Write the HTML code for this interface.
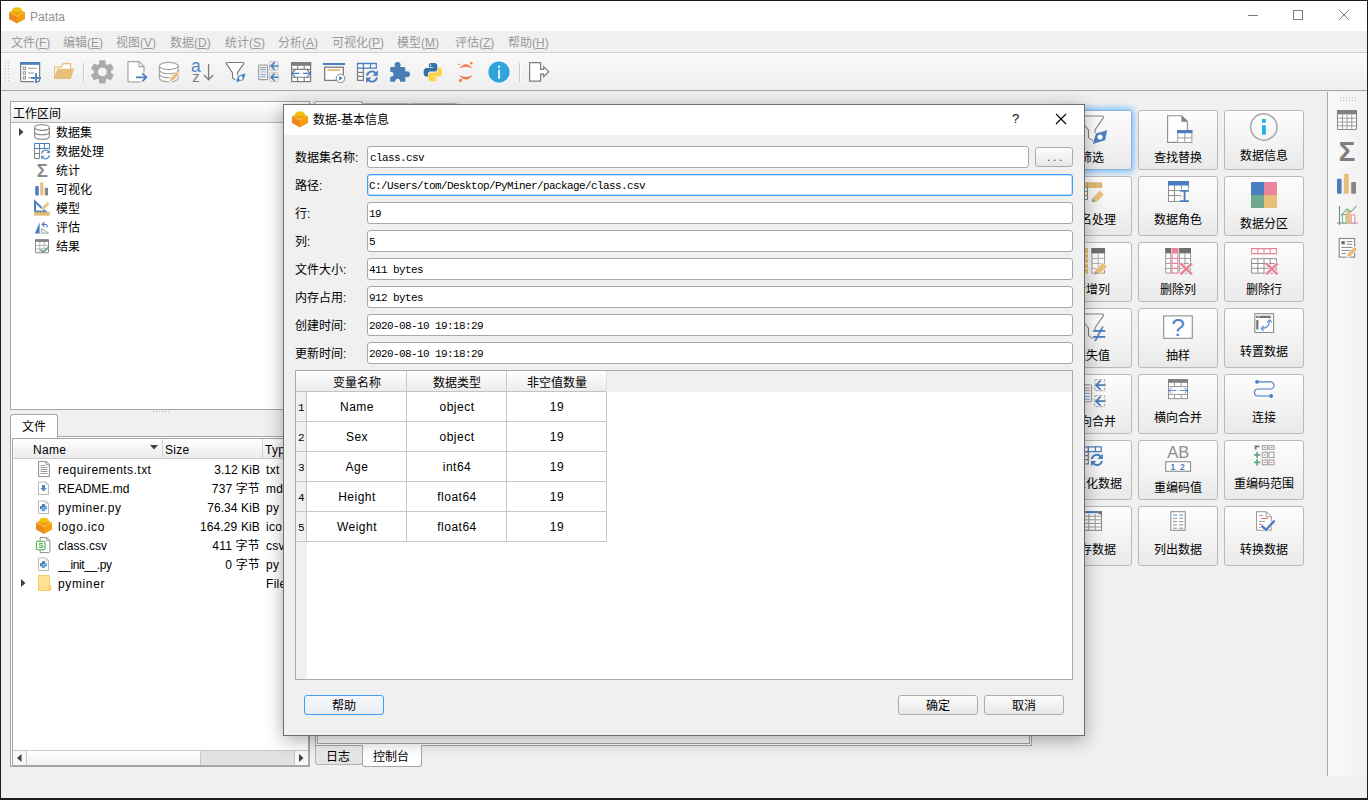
<!DOCTYPE html>
<html lang="zh">
<head>
<meta charset="utf-8">
<title>Patata</title>
<style>
*{box-sizing:border-box;margin:0;padding:0}
html,body{width:1368px;height:800px;overflow:hidden}
body{position:relative;background:#f0f0f0;color:#000;font:12px/16px "Liberation Sans","Noto Sans CJK SC",sans-serif}
.abs{position:absolute}
.t{position:absolute;white-space:nowrap;line-height:16px;margin-top:1px}
svg{position:absolute;overflow:visible}
/* window chrome */
#titlebar{left:1px;top:1px;width:1366px;height:30px;background:#fff}
#menubar{left:1px;top:31px;width:1366px;height:21px;background:#f0f0f0;color:#9a9a9a}
#menubar .t{top:3px}
#toolbar{left:1px;top:52px;width:1366px;height:39px;background:linear-gradient(#f9f9f9,#eeeeee);border-top:1px solid #d0d0d0;border-bottom:1px solid #a8a8a8}
#winborder{left:0;top:0;width:1368px;height:800px;border:1px solid #1c1c1c;border-bottom-width:2px;pointer-events:none;z-index:50}
/* left */
.frame{border:1px solid #a6a6a6;background:#fff}
.hdr{background:linear-gradient(#ffffff,#f3f3f3 60%,#ececec);}
.mono{font-family:"Liberation Mono","Noto Sans CJK SC",monospace;font-size:11px;letter-spacing:-.6px}
/* dialog */
#dlg{left:283px;top:104px;width:802px;height:632px;border:1px solid #6e6e6e;background:#f0f0f0;box-shadow:0 4px 17px 0 rgba(0,0,0,.33);z-index:20}
#dlg .title{left:0;top:0;width:800px;height:30px;background:#fff}
.inp{position:absolute;height:22px;border:1px solid #a9a9a9;border-radius:3px;background:#fff}
.btn{position:absolute;border:1px solid #adadad;border-radius:3px;background:linear-gradient(#fdfdfd,#f0f0f0 60%,#e6e6e6);text-align:center}
.tb{position:absolute;width:80px;height:60px;border:1px solid #b9b9b9;border-radius:3px;background:linear-gradient(#fdfdfd,#f3f3f3 55%,#e9e9e9);text-align:center}
.tb span{position:absolute;margin-top:2px;left:-20px;right:-20px;white-space:nowrap;font-size:12px;line-height:16px}
.hc{text-align:center}
.cc{width:100px;text-align:center;letter-spacing:.5px}
.fl{letter-spacing:.3px}
</style>
</head>
<body>
<!-- TITLEBAR -->
<div class="abs" id="titlebar">
  <svg style="left:8px;top:6px" width="16" height="17" viewBox="0 0 16 17"><path d="M0 5.3L8 1.2L16 5.3L8 9.6Z" fill="#f5b31a"/><path d="M0 5.3L8 9.6V16.6L0 12.1Z" fill="#ec881d"/><path d="M16 5.3L8 9.6V16.6L16 12.1Z" fill="#f59d0e"/><path d="M3.5 2.8V4.8A4.5 2.4 0 0 0 12.5 4.8V2.800Z" fill="#ee9a1e"/><ellipse cx="8" cy="2.800" rx="4.500" ry="2.500" fill="#f2c10f"/></svg>
  <div class="t" style="left:29px;top:7px;color:#8f8f8f;font-size:12px;letter-spacing:.05px">Patata</div>
  <svg style="left:1247px;top:14px" width="11" height="2"><path d="M0 .5H10" stroke="#7c7c7c" stroke-width="1"/></svg>
  <svg style="left:1292px;top:9px" width="11" height="11"><rect x=".5" y=".5" width="9" height="9" fill="none" stroke="#7c7c7c"/></svg>
  <svg style="left:1338px;top:9px" width="11" height="11"><path d="M0 0L10 10M10 0L0 10" stroke="#7c7c7c" stroke-width="1"/></svg>
</div>
<!-- MENUBAR -->
<div class="abs" id="menubar">
  <div class="t" style="left:10px">文件(<u>F</u>)</div>
  <div class="t" style="left:62px">编辑(<u>E</u>)</div>
  <div class="t" style="left:115px">视图(<u>V</u>)</div>
  <div class="t" style="left:169px">数据(<u>D</u>)</div>
  <div class="t" style="left:224px">统计(<u>S</u>)</div>
  <div class="t" style="left:277px">分析(<u>A</u>)</div>
  <div class="t" style="left:331px">可视化(<u>P</u>)</div>
  <div class="t" style="left:396px">模型(<u>M</u>)</div>
  <div class="t" style="left:454px">评估(<u>Z</u>)</div>
  <div class="t" style="left:507px">帮助(<u>H</u>)</div>
</div>
<!-- TOOLBAR -->
<div class="abs" id="toolbar">
<!--TOOLBAR-ICONS-->
</div>

<!-- LEFT: WORKSPACE -->
<div class="abs frame" id="ws" style="left:10px;top:101px;width:300px;height:309px">
<div class="abs hdr" style="left:0;top:0;width:298px;height:21px;border-bottom:1px solid #b4b4b4"></div>
<div class="t" style="left:2px;top:3px">工作区间</div>
<svg style="left:8px;top:26px" width="5" height="8"><path d="M0 0L4.5 4L0 8Z" fill="#404040"/></svg>
<div class="t" style="left:45px;top:22px">数据集</div>
<!--WSI0-->
<div class="t" style="left:45px;top:41px">数据处理</div>
<!--WSI1-->
<div class="t" style="left:45px;top:60px">统计</div>
<!--WSI2-->
<div class="t" style="left:45px;top:79px">可视化</div>
<!--WSI3-->
<div class="t" style="left:45px;top:98px">模型</div>
<!--WSI4-->
<div class="t" style="left:45px;top:117px">评估</div>
<!--WSI5-->
<div class="t" style="left:45px;top:136px">结果</div>
<!--WSI6-->
</div>
<div class="abs" style="left:153px;top:411px;width:16px;height:1px;background:repeating-linear-gradient(90deg,#b0b0b0 0 1px,transparent 1px 3px)"></div>
<!-- LEFT: FILES -->
<div class="abs" id="files" style="left:10px;top:414px;width:301px;height:354px">
<div class="abs" style="left:0;top:22px;width:300px;height:331px;border:1px solid #a6a6a6;background:#fff"></div>
<div class="abs" style="left:2px;top:24px;width:297px;height:328px;border:1px solid #a6a6a6;background:#fff"></div>
<div class="abs" style="left:0;top:0;width:48px;height:24px;border:1px solid #a6a6a6;border-bottom:none;border-radius:3px 3px 0 0;background:#fff"></div>
<div class="t" style="left:12px;top:4px">文件</div>
<div class="abs hdr" style="left:3px;top:25px;width:295px;height:20px;border-bottom:1px solid #c9c9c9"></div>
<div class="abs" style="left:152px;top:25px;width:1px;height:20px;background:#d0d0d0"></div>
<div class="abs" style="left:252px;top:25px;width:1px;height:20px;background:#d0d0d0"></div>
<div class="t fl" style="left:23px;top:27px">Name</div>
<div class="t fl" style="left:155px;top:27px">Size</div>
<div class="t fl" style="left:255px;top:27px">Type</div>
<svg style="left:140px;top:31px" width="8" height="5"><path d="M0 0H8L4 4.5Z" fill="#404040"/></svg>
<div class="t fl" style="left:48px;top:47px;letter-spacing:0.46px">requirements.txt</div>
<div class="t fl" style="left:153px;width:97px;text-align:right;top:47px;letter-spacing:0.06px">3.12 KiB</div>
<div class="t fl" style="left:256px;top:47px">txt</div>
<!--FI0-->
<div class="t fl" style="left:48px;top:66px;letter-spacing:0px">README.md</div>
<div class="t fl" style="left:153px;width:97px;text-align:right;top:66px;letter-spacing:0.13px">737 字节</div>
<div class="t fl" style="left:256px;top:66px">md</div>
<!--FI1-->
<div class="t fl" style="left:48px;top:85px;letter-spacing:0.55px">pyminer.py</div>
<div class="t fl" style="left:153px;width:97px;text-align:right;top:85px;letter-spacing:0.09px">76.34 KiB</div>
<div class="t fl" style="left:256px;top:85px">py</div>
<!--FI2-->
<div class="t fl" style="left:48px;top:104px;letter-spacing:0.73px">logo.ico</div>
<div class="t fl" style="left:153px;width:97px;text-align:right;top:104px;letter-spacing:0.14px">164.29 KiB</div>
<div class="t fl" style="left:256px;top:104px">ico</div>
<!--FI3-->
<div class="t fl" style="left:48px;top:123px;letter-spacing:0.04px">class.csv</div>
<div class="t fl" style="left:153px;width:97px;text-align:right;top:123px;letter-spacing:0.2px">411 字节</div>
<div class="t fl" style="left:256px;top:123px">csv</div>
<!--FI4-->
<div class="t fl" style="left:48px;top:142px;letter-spacing:-0.4px">__init__.py</div>
<div class="t fl" style="left:153px;width:97px;text-align:right;top:142px;letter-spacing:0.16px">0 字节</div>
<div class="t fl" style="left:256px;top:142px">py</div>
<!--FI5-->
<div class="t fl" style="left:48px;top:161px;letter-spacing:0.63px">pyminer</div>
<div class="t fl" style="left:256px;top:161px">File</div>
<!--FI6-->
<svg style="left:11px;top:165px" width="5" height="8"><path d="M0 0L4.5 4L0 8Z" fill="#404040"/></svg>
<div class="abs" style="left:3px;top:336px;width:295px;height:15px;background:#e1e1e1;border-top:1px solid #c8c8c8"></div>
<div class="abs" style="left:3px;top:337px;width:14px;height:14px;background:#f7f7f7;border-right:1px solid #c8c8c8"></div>
<div class="abs" style="left:284px;top:337px;width:14px;height:14px;background:#f7f7f7;border-left:1px solid #c8c8c8"></div>
<div class="abs" style="left:17px;top:337px;width:174px;height:14px;background:linear-gradient(#ffffff,#f1f1f1);border-right:1px solid #c8c8c8"></div>
<svg style="left:7px;top:340px" width="5" height="8"><path d="M4.5 0L0 4L4.5 8Z" fill="#404040"/></svg>
<svg style="left:289px;top:340px" width="5" height="8"><path d="M0 0L4.5 4L0 8Z" fill="#404040"/></svg>
</div>

<!-- CENTER -->
<div class="abs" id="center">
<div class="abs" style="left:315px;top:123px;width:717px;height:623px;border:1px solid #a6a6a6;background:#fff"></div>
<div class="abs" style="left:317px;top:125px;width:713px;height:619px;border:1px solid #a6a6a6;background:#fff"></div>
<div class="abs" style="left:314px;top:101px;width:49px;height:23px;border:1px solid #a6a6a6;border-bottom:none;border-radius:3px 3px 0 0;background:#fff"></div>
<div class="abs" style="left:362px;top:103px;width:49px;height:21px;border:1px solid #b4b4b4;border-bottom:none;border-radius:3px 3px 0 0;background:linear-gradient(#f4f4f4,#e4e4e4)"></div>
<div class="abs" style="left:410px;top:103px;width:48px;height:21px;border:1px solid #b4b4b4;border-bottom:none;border-radius:3px 3px 0 0;background:linear-gradient(#f4f4f4,#e4e4e4)"></div>
<div class="abs" style="left:315px;top:746px;width:48px;height:19px;border:1px solid #b4b4b4;border-top:none;border-radius:0 0 3px 3px;background:linear-gradient(#efefef,#e2e2e2)"></div>
<div class="abs" style="left:362px;top:745px;width:60px;height:22px;border:1px solid #a6a6a6;border-top:none;border-radius:0 0 3px 3px;background:#fff"></div>
<div class="t" style="left:326px;top:748px">日志</div>
<div class="t" style="left:373px;top:748px">控制台</div>
</div>

<!-- RIGHT TOOL BUTTONS -->
<div class="abs" id="tools" style="left:0;top:0">
<div class="tb" style="left:1052px;top:110px;border-color:#8ab4dc;box-shadow:0 0 6px 2px rgba(110,185,250,.9)"><span style="top:37px">筛选</span><!--TI00--></div>
<div class="tb" style="left:1138px;top:110px"><span style="top:37px">查找替换</span><!--TI01--></div>
<div class="tb" style="left:1224px;top:110px"><span style="top:35px">数据信息</span><!--TI02--></div>
<div class="tb" style="left:1052px;top:176px"><span style="top:33px">列名处理</span><!--TI10--></div>
<div class="tb" style="left:1138px;top:176px"><span style="top:33px">数据角色</span><!--TI11--></div>
<div class="tb" style="left:1224px;top:176px"><span style="top:37px">数据分区</span><!--TI12--></div>
<div class="tb" style="left:1052px;top:242px"><span style="top:37px">新增列</span><!--TI20--></div>
<div class="tb" style="left:1138px;top:242px"><span style="top:37px">删除列</span><!--TI21--></div>
<div class="tb" style="left:1224px;top:242px"><span style="top:37px">删除行</span><!--TI22--></div>
<div class="tb" style="left:1052px;top:308px"><span style="top:37px">缺失值</span><!--TI30--></div>
<div class="tb" style="left:1138px;top:308px"><span style="top:37px">抽样</span><!--TI31--></div>
<div class="tb" style="left:1224px;top:308px"><span style="top:33px">转置数据</span><!--TI32--></div>
<div class="tb" style="left:1052px;top:374px"><span style="top:37px">纵向合并</span><!--TI40--></div>
<div class="tb" style="left:1138px;top:374px"><span style="top:33px">横向合并</span><!--TI41--></div>
<div class="tb" style="left:1224px;top:374px"><span style="top:33px">连接</span><!--TI42--></div>
<div class="tb" style="left:1052px;top:440px"><span style="top:33px">标准化数据</span><!--TI50--></div>
<div class="tb" style="left:1138px;top:440px"><span style="top:37px">重编码值</span><!--TI51--></div>
<div class="tb" style="left:1224px;top:440px"><span style="top:33px">重编码范围</span><!--TI52--></div>
<div class="tb" style="left:1052px;top:506px"><span style="top:33px">保存数据</span><!--TI60--></div>
<div class="tb" style="left:1138px;top:506px"><span style="top:33px">列出数据</span><!--TI61--></div>
<div class="tb" style="left:1224px;top:506px"><span style="top:33px">转换数据</span><!--TI62--></div>
</div>

<!-- RIGHT TOOLBAR -->
<div class="abs" id="rbar" style="left:1327px;top:92px;width:40px;height:684px;background:linear-gradient(90deg,#fafafa,#f0f0f0);border-left:1px solid #a8a8a8">
<div class="abs" style="left:12px;top:5px;width:18px;height:4px;background:repeating-linear-gradient(90deg,#bcbcbc 0 1px,transparent 1px 3px) 0 0/100% 1px no-repeat,repeating-linear-gradient(90deg,#bcbcbc 0 1px,transparent 1px 3px) 0 3px/100% 1px no-repeat"></div>
<!--RB0-->
<!--RB1-->
<!--RB2-->
<!--RB3-->
<!--RB4-->
</div>

<svg id="bgsvg" style="left:0;top:0;z-index:5;pointer-events:none" width="1368" height="800" viewBox="0 0 1368 800">
<g id="tb">
<rect x="5" y="62" width="1" height="1" fill="#bdbdbd"/><rect x="5" y="65" width="1" height="1" fill="#bdbdbd"/><rect x="5" y="68" width="1" height="1" fill="#bdbdbd"/><rect x="5" y="71" width="1" height="1" fill="#bdbdbd"/><rect x="5" y="74" width="1" height="1" fill="#bdbdbd"/><rect x="5" y="77" width="1" height="1" fill="#bdbdbd"/><rect x="5" y="80" width="1" height="1" fill="#bdbdbd"/><rect x="8" y="62" width="1" height="1" fill="#bdbdbd"/><rect x="8" y="65" width="1" height="1" fill="#bdbdbd"/><rect x="8" y="68" width="1" height="1" fill="#bdbdbd"/><rect x="8" y="71" width="1" height="1" fill="#bdbdbd"/><rect x="8" y="74" width="1" height="1" fill="#bdbdbd"/><rect x="8" y="77" width="1" height="1" fill="#bdbdbd"/><rect x="8" y="80" width="1" height="1" fill="#bdbdbd"/><g transform="translate(18,60)"><rect x="2.6" y="2.6" width="19" height="19" rx="1.2" fill="#fff" stroke="#7d7d7d" stroke-width="1.2"/><rect x="2" y="2" width="20.2" height="2.8" fill="#4a7ebf"/>
<rect x="5.2" y="7" width="2.4" height="2.4" fill="#fff" stroke="#7d7d7d" stroke-width=".8"/><rect x="5.2" y="11.8" width="2.4" height="2.4" fill="#fff" stroke="#7d7d7d" stroke-width=".8"/><rect x="5.2" y="16.6" width="2.4" height="2.4" fill="#fff" stroke="#7d7d7d" stroke-width=".8"/>
<path d="M10 8.2H18.5M10 13H16M10 17.8H12.5" stroke="#9a9a9a" stroke-width="1.1"/>
<rect x="16" y="19.6" width="7" height="3.4" fill="#f3f3f3"/><path d="M21.6 17V20.400Q21.600 21.600 20.400 21.600H19" fill="none" stroke="#7d7d7d" stroke-width="1.2"/><path d="M12.900 18H22.900M18 13V23" stroke="#5288c8" stroke-width="1.900"/></g>
<g transform="translate(51,60)"><path d="M3.6 18.5V7.2H10.3L12.2 3.6H19.6V9" fill="#fff" stroke="#e8bf7a" stroke-width="1.2" stroke-linejoin="round"/><path d="M3 19L6.2 8.8H23L19.8 19Z" fill="#e8bf7a"/></g>
<path d="M83.5 63V82" stroke="#c9c9c9" stroke-width="1"/><path d="M84.5 63V82" stroke="#fdfdfd" stroke-width="1"/>
<g transform="translate(90,60)"><path d="M9.77 4.45 L10.00 1.17 L14.80 1.17 L15.03 4.45 L17.53 5.89 L20.50 4.45 L22.90 8.61 L20.17 10.46 L20.17 13.34 L22.90 15.19 L20.50 19.35 L17.53 17.91 L15.03 19.35 L14.80 22.63 L10.00 22.63 L9.77 19.35 L7.27 17.91 L4.30 19.35 L1.90 15.19 L4.63 13.34 L4.63 10.46 L1.90 8.61 L4.30 4.45 L7.27 5.89Z M17.6 11.9 A5.2 5.2 0 1 0 7.2 11.9 A5.2 5.2 0 1 0 17.6 11.9Z" fill="#ababab" fill-rule="evenodd" stroke="#ababab" stroke-width="1.6" stroke-linejoin="round"/></g>
<g transform="translate(124,60)"><path d="M4 1.6H15.2L20 6.4V21.8H4Z" fill="#fff"/><path d="M20 12.800V6.400L15.200 1.600H4V21.800H16.600" fill="none" stroke="#a6a6a6" stroke-width="1.2" stroke-linejoin="round"/><path d="M15 1.8V6.6H19.8" fill="none" stroke="#a6a6a6" stroke-width="1.1"/>
<path d="M12 17.300H22M18.200 13.300L22.400 17.300L18.200 21.300" fill="none" stroke="#4a7ebf" stroke-width="1.7"/></g>
<g transform="translate(157,60)"><path d="M2.4 6V18C2.4 20 6.6 21.8 11.8 21.8S21.2 20 21.2 18V6" fill="#fff" stroke="#a2a2a2" stroke-width="1.1"/><ellipse cx="11.8" cy="6" rx="9.4" ry="3.6" fill="#fff" stroke="#a2a2a2" stroke-width="1.1"/><path d="M2.4 10C2.4 12 6.6 13.8 11.8 13.8S21.2 12 21.2 10M2.4 14C2.4 16 6.6 17.8 11.8 17.8S21.2 16 21.2 14" fill="none" stroke="#a2a2a2" stroke-width="1.1"/>
<path d="M12.2 22.2L13.4 17.8L19.8 11.4L22.6 14.2L16.2 20.8Z" fill="#e8bf7a" stroke="#fff" stroke-width=".8"/></g>
<g transform="translate(190,60)"><text x="1" y="11.5" font-family="Liberation Sans, sans-serif" font-size="17.5" fill="#4f86c6">a</text><text x="2.2" y="21.9" font-family="Liberation Sans, sans-serif" font-size="15" fill="#7d7d7d">z</text>
<path d="M18.6 4V19.6M14 15L18.6 19.8L23.2 15" fill="none" stroke="#7d7d7d" stroke-width="1.3"/></g>
<g transform="translate(223,60)"><path d="M4.4 2.5H19.6Q21.6 2.5 20.5 4.2L14.4 12.6V16L12.6 20.2L9.6 18V12.900L3.500 4.200Q2.400 2.500 4.400 2.500Z" fill="#fff" stroke="none"/><path d="M14.4 15V12.600L20.500 4.200Q21.600 2.500 19.600 2.500H4.400Q2.400 2.500 3.500 4.200L9.600 12.900V18L12.400 20" fill="none" stroke="#7d7d7d" stroke-width="1.15" stroke-linejoin="round"/><path d="M22.9 13.1L20.8 20L12.9 22.600L14.700 15.700Z" fill="#4a7ebf" stroke="#f6f6f6" stroke-width=".5"/><circle cx="17.800" cy="18" r="1.900" fill="#fff"/></g>
<g transform="translate(256,60)"><rect x="2.6" y="5" width="9" height="14.6" rx="1" fill="#f4f4f4" stroke="#9a9a9a" stroke-width="1.1"/><path d="M4.2 7.4H10M4.2 9.4H10" stroke="#8d8d8d" stroke-width=".9"/><rect x="4.2" y="10.8" width="5.8" height="2" fill="#c3d3e8"/><path d="M4.2 14.6H10M4.2 16.8H10" stroke="#6f9ad0" stroke-width=".9"/>
<rect x="13.6" y="1.6" width="8.6" height="8.8" rx="1" fill="#eee" stroke="#c4c4c4" stroke-width="1"/><rect x="13.6" y="12.8" width="8.6" height="8.8" rx="1" fill="#eee" stroke="#c4c4c4" stroke-width="1"/>
<path d="M22.4 6H15M18.6 2.4L15 6L18.6 9.6M22.4 17.2H15M18.6 13.6L15 17.2L18.6 20.8" fill="none" stroke="#4a7ebf" stroke-width="1.5"/></g>
<g transform="translate(289,60)"><rect x="2.6" y="2.6" width="19" height="19" fill="#fff" stroke="#7d7d7d" stroke-width="1.2"/><rect x="2" y="2" width="20.2" height="3.8" fill="#7e7e7e"/>
<path d="M2.6 9.4H21.6M2.6 17.2H21.6M8.6 5.4V9.4M15.2 5.4V9.4M8.6 17.2V21.6M15.2 17.2V21.6" stroke="#7d7d7d" stroke-width="1.1"/><path d="M3 13.3H21" stroke="#d4d4d4" stroke-width="1" stroke-dasharray="2 1.5"/>
<path d="M2.8 13.3H10M6.2 9.8L2.8 13.3L6.2 16.8M21.4 13.3H14.2M18 9.8L21.4 13.3L18 16.8" fill="none" stroke="#4a7ebf" stroke-width="1.2"/></g>
<g transform="translate(322,60)"><rect x="1" y="3" width="22.2" height="2" fill="#4a7ebf"/><rect x="2.7" y="7.2" width="18.6" height="13.2" fill="#fff" stroke="#7d7d7d" stroke-width="1.3"/><path d="M5.4 10H18.6" stroke="#e8bf7a" stroke-width="1.9"/>
<circle cx="18.5" cy="18.3" r="4.3" fill="#fff" stroke="#8a8a8a" stroke-width="1"/><path d="M17.1 15.900L20.700 18.300L17.100 20.700Z" fill="#4a7ebf"/></g>
<g transform="translate(355,60)"><path d="M2.5 8.2H8.4V20.4H2.5ZM2.5 12.3H8.4M2.5 16.3H8.4" fill="#fff" stroke="#7d7d7d" stroke-width="1.2"/><path d="M2.5 3.5H21.3V8.2H2.5ZM8.4 3.5V8.2M15.5 3.5V8.2" fill="#fff" stroke="#4a7ebf" stroke-width="1.3"/>
<path d="M12 15.6A5 5 0 0 1 20.8 13.2M22 17.4A5 5 0 0 1 13.2 19.8" fill="none" stroke="#4a7ebf" stroke-width="1.9"/><path d="M22.9 10.3V15.7H17.5ZM11.1 22.9V17.5H16.5Z" fill="#4a7ebf"/></g>
<g transform="translate(387,60)"><rect x="3.2" y="7" width="15.1" height="14.8" rx=".8" fill="#4a7cb8"/><circle cx="10.6" cy="4.9" r="3" fill="#4a7cb8"/><circle cx="20" cy="14.2" r="3" fill="#4a7cb8"/><circle cx="3.9" cy="14.2" r="2.5" fill="#f4f4f4"/><circle cx="10.6" cy="21.3" r="2.5" fill="#f1f1f1"/></g>
<g transform="translate(420,60)"><path d="M12.6 3C8.600 3 8.800 4.800 8.800 4.800V7.200H12.800V8H6.600S3.600 7.600 3.600 12.200S6.200 16.600 6.200 16.600H8V14.200S7.900 11.600 10.600 11.600H14.800S17.300 11.640 17.300 9.200V5.400S17.700 3 12.600 3Z" fill="#3572a5"/><circle cx="10.500" cy="5.300" r=".8" fill="#fff"/>
<path d="M13 21.400C17 21.400 16.800 19.600 16.800 19.600V17.200H12.800V16.400H19S22 16.800 22 12.200S19.400 7.800 19.400 7.800H17.600V10.200S17.700 12.800 15 12.800H10.800S8.300 12.760 8.300 15.200V19S7.900 21.400 13 21.400Z" fill="#ffd343"/><circle cx="15.100" cy="19.100" r=".8" fill="#fff"/></g>
<g transform="translate(453,60)"><path d="M6 8.8Q12.900 -.4 19.800 8.800Q12.900 4.600 6 8.800Z" fill="#f37a4e"/><path d="M6 14.900Q12.900 24.100 19.800 14.900Q12.900 19.100 6 14.900Z" fill="#f37a4e"/>
<circle cx="18.300" cy="3.200" r="1.300" fill="#f37a4e"/><circle cx="6.200" cy="4.400" r=".8" fill="#f37a4e"/><circle cx="7.500" cy="20.400" r="1.600" fill="#f37a4e"/></g>
<g transform="translate(486,60)"><circle cx="13" cy="12.100" r="10.600" fill="#2fa3dc"/><rect x="12.100" y="9.600" width="1.900" height="9.200" fill="#eaf6fc"/><rect x="12.100" y="5.600" width="1.900" height="2.200" fill="#eaf6fc"/></g>
<path d="M519.500 63V82" stroke="#c9c9c9" stroke-width="1"/><path d="M520.500 63V82" stroke="#fdfdfd" stroke-width="1"/>
<g transform="translate(526,60)"><path d="M3.600 2.600H14.600V9.300H17.700V6.700L22.700 11.700L17.700 16.600V14.100H14.600V21.200H3.600Z" fill="#fff" stroke="#7d7d7d" stroke-width="1.2" stroke-linejoin="miter"/></g>
</g>
<g id="left">
<g transform="translate(34,124)"><path d="M.6 3.6V12.400C.6 14 3.800 15.200 8 15.200S15.400 14 15.400 12.400V3.600" fill="#fff" stroke="#858585" stroke-width="1.1"/><ellipse cx="8" cy="3.600" rx="7.400" ry="2.800" fill="#fff" stroke="#858585" stroke-width="1.1"/><path d="M.6 8C.6 9.600 3.800 10.800 8 10.800S15.400 9.600 15.400 8" fill="none" stroke="#858585" stroke-width="1.1"/></g>
<g transform="translate(34,143)"><path d="M.5 5.500H5.500V15.500H.5ZM.5 10.500H5.500" fill="#fff" stroke="#858585" stroke-width="1"/><path d="M.5 .5H15.500V5.500H.5ZM5.500 .5V5.500M10.500 .5V5.500" fill="#fff" stroke="#4a7ebf" stroke-width="1"/>
<path d="M7.600 10.600A4 4 0 0 1 14.800 8.800M15.400 12.400A4 4 0 0 1 8.200 14.200" fill="none" stroke="#5b8fd0" stroke-width="1.3"/><path d="M16 6.600V10.200H12.400ZM7 16.400V12.800H10.600Z" fill="#5b8fd0"/></g>
<g transform="translate(34,162)"><text x="8.200" y="14.600" text-anchor="middle" font-family="Liberation Sans, sans-serif" font-weight="bold" font-size="18.500" fill="#8a8a8a">Σ</text></g>
<g transform="translate(34,181)"><rect x="1.200" y="5" width="3.600" height="9.600" rx="1" fill="#4a7ebf"/><rect x="6.200" y="1.200" width="3.200" height="13.400" rx="1" fill="#e8bf7a"/><rect x="10.800" y="6.800" width="3.200" height="7.800" rx=".8" fill="#858585"/></g>
<g transform="translate(34,200)"><path d="M1 1.600V11.600H11.400Z" fill="none" stroke="#4a7ebf" stroke-width="2" stroke-linejoin="miter"/><path d="M7.200 10.400L8 7.400L13.600 1.600L15.800 3.800L10.200 9.600Z" fill="#e8bf7a" stroke="#fff" stroke-width=".6"/><path d="M12.600 2.600L14.800 4.800" stroke="#fff" stroke-width=".7"/><rect x="0" y="11.800" width="16" height="3.900" fill="#e8bf7a"/><path d="M3.500 12V13.600M6.500 12V13.600M9.500 12V13.600M12.500 12V13.600" stroke="#9c8a66" stroke-width=".8"/></g>
<g transform="translate(34,219)"><path d="M.8 14.600H5.600V3.600Z" fill="#4a7ebf"/><path d="M7.400 14.100H14.600L7.400 9.400Z" fill="#f4f4f4" stroke="#a2a2a2" stroke-width="1"/><path d="M8.800 5.400H11A2.300 2.300 0 0 1 13.200 7.800V8.600" fill="none" stroke="#4a7ebf" stroke-width="1.100"/><path d="M10.400 3L8 5.400L10.400 7.800" fill="none" stroke="#4a7ebf" stroke-width="1.100"/></g>
<g transform="translate(34,238)"><rect x="1.500" y="1.800" width="13" height="13" rx=".6" fill="#fff" stroke="#8a8a8a" stroke-width="1"/><rect x="1" y="1.300" width="14" height="2.600" fill="#838383"/><path d="M1.500 7.400H14.500M1.500 10.900H14.500M5.800 4V14.800M10.200 4V14.800" stroke="#b5b5b5" stroke-width="1"/><path d="M6.600 11.600L9.400 14.200L15.200 8.400" fill="none" stroke="#5fa67c" stroke-width="1.600"/></g>
<g transform="translate(38,461)"><path d="M.6 .6H8.400L11.400 3.600V15.600H.6Z" fill="#fff" stroke="#8a8a8a" stroke-width="1"/><path d="M8.200 .8V3.800H11.200" fill="none" stroke="#8a8a8a" stroke-width=".9"/><path d="M2.500 4.500H7M2.500 6.500H9.500M2.500 8.500H9.500M2.500 10.500H9.500M2.500 12.500H9.500" stroke="#8f8f8f" stroke-width=".9"/></g>
<g transform="translate(38,481.5)"><path d="M.5 .5H8L10.500 3V13H.5Z" fill="#fff" stroke="#b9b9b9" stroke-width="1"/><path d="M7.800 .6V3.200H10.400" fill="none" stroke="#c5c5c5" stroke-width=".8"/><path d="M4 3.600H7V6.400H8.800L5.500 10L2.200 6.400H4Z" fill="#4f88c6"/></g>
<g transform="translate(38,500.5)"><path d="M.5 .5H8L10.500 3V13H.5Z" fill="#fff" stroke="#b9b9b9" stroke-width="1"/><path d="M7.800 .6V3.200H10.400" fill="none" stroke="#c5c5c5" stroke-width=".8"/><path d="M5.400 3.600C3.800 3.600 3.900 4.300 3.900 4.300V5.200H5.500V5.500H3.100S1.900 5.400 1.900 7.200S2.900 8.900 2.900 8.900H3.600V8S3.600 7 4.600 7H6.200S7.200 7 7.200 6.100V4.500S7.300 3.600 5.400 3.600Z" fill="#3a78ad"/><path d="M5.600 10.800C7.200 10.800 7.100 10.100 7.100 10.100V9.200H5.500V8.900H7.900S9.100 9 9.100 7.200S8.100 5.500 8.100 5.500H7.400V6.400S7.400 7.400 6.400 7.400H4.800S3.800 7.400 3.800 8.300V9.900S3.700 10.800 5.600 10.800Z" fill="#5a9fd4"/></g>
<g transform="translate(36,517.5)"><path d="M0 5.3L8 1.2L16 5.3L8 9.6Z" fill="#f5b31a"/><path d="M0 5.3L8 9.6V16.6L0 12.1Z" fill="#ec881d"/><path d="M16 5.3L8 9.6V16.6L16 12.1Z" fill="#f59d0e"/><path d="M3.5 2.8V4.8A4.5 2.4 0 0 0 12.5 4.8V2.800Z" fill="#ee9a1e"/><ellipse cx="8" cy="2.800" rx="4.500" ry="2.500" fill="#f2c10f"/></g>
<g transform="translate(38.5,537)"><path d="M1.600 .6H8.400L11.400 3.600V14.400Q11.400 15.600 10.200 15.600H1.600Z" fill="#fff" stroke="#8f8f8f" stroke-width="1"/><path d="M8.200 .8V3.800H11.200" fill="none" stroke="#8f8f8f" stroke-width=".9"/><rect x="-2.100" y="4.200" width="8.600" height="8.600" rx="1.200" fill="#fff" stroke="#4bb04f" stroke-width="1.100"/><text x="-.2" y="11.300" font-family="Liberation Sans, sans-serif" font-weight="bold" font-size="8" fill="#4bb04f">S</text></g>
<g transform="translate(38,557.5)"><path d="M.5 .5H8L10.500 3V13H.5Z" fill="#fff" stroke="#b9b9b9" stroke-width="1"/><path d="M7.800 .6V3.200H10.400" fill="none" stroke="#c5c5c5" stroke-width=".8"/><path d="M5.400 3.600C3.800 3.600 3.900 4.300 3.900 4.300V5.200H5.500V5.500H3.100S1.900 5.400 1.900 7.200S2.900 8.900 2.900 8.900H3.600V8S3.600 7 4.600 7H6.200S7.200 7 7.200 6.100V4.500S7.300 3.600 5.400 3.600Z" fill="#3a78ad"/><path d="M5.600 10.800C7.200 10.800 7.100 10.100 7.100 10.100V9.200H5.500V8.900H7.900S9.100 9 9.100 7.200S8.100 5.500 8.100 5.500H7.400V6.400S7.400 7.400 6.400 7.400H4.800S3.800 7.400 3.800 8.300V9.900S3.700 10.800 5.600 10.800Z" fill="#5a9fd4"/></g>
<g transform="translate(38,575)"><path d="M.6 .6H11.400V10.600H12.600V15.400H.6Z" fill="#ffe296" stroke="#f3c85a" stroke-width="1" stroke-linejoin="round"/><path d="M11 10.600V15" stroke="#f3c85a" stroke-width=".8"/></g>
</g>
<g id="tools">
<path d="M1080 116H1103L1095 130V134L1093 140.400L1088.500 137.500V130L1080 120Z" fill="#fdfdfd"/><path d="M1080 116H1101.600Q1104.400 116 1103 118.400L1095 129.800V133.200M1080 119.600L1088.500 130V137.600L1093 140.600" fill="none" stroke="#858585" stroke-width="1.100" stroke-linejoin="round"/><path d="M1107.200 130.200L1105 140.300L1092.800 144L1096 133.500Z" fill="#4a7ebf"/><circle cx="1100" cy="137" r="2.600" fill="#fff"/>
<path d="M1167.6 115.7H1181.6L1187.4 121.5V142.4H1167.6Z" fill="#fff" stroke="#8f8f8f" stroke-width="1.1"/><path d="M1181.4 115.4L1187.7 121.7H1181.4Z" fill="#808080"/>
<rect x="1177.2" y="130" width="15.2" height="13" fill="#fff"/><rect x="1177.7" y="130.5" width="14.2" height="12" fill="#fff" stroke="#9a9a9a" stroke-width="1"/><rect x="1177.2" y="130" width="15.2" height="3.2" fill="#4a7ebf"/><path d="M1184.8 133V142.500M1177.700 137.800H1191.900" stroke="#9a9a9a" stroke-width="1"/>
<circle cx="1263.8" cy="127" r="13.200" fill="none" stroke="#a6a6a6" stroke-width="1.500"/><rect x="1262" y="119" width="3.800" height="3.800" fill="#1fb1e6"/><rect x="1262" y="125.300" width="3.800" height="9.300" fill="#1fb1e6"/>
<path d="M1080.500 182.900H1101.500V187.300H1080.500ZM1087.500 182.900V187.300M1094.500 182.900V187.300" fill="#e8bf7a" stroke="#d7a95c" stroke-width="1"/><path d="M1080.500 187.300H1087.500V199.500H1080.500ZM1080.500 191.400H1087.500M1080.500 195.400H1087.500" fill="#fff" stroke="#858585" stroke-width="1"/>
<path d="M1091.600 202.200L1093 197.600L1099.800 190.600L1103.800 194.600L1097 201.400Z" fill="#e8bf7a"/><path d="M1091.600 202.200L1092.800 198.400L1095.600 201.200Z" fill="#9a9a9a"/>
<rect x="1168.500" y="181.500" width="20" height="20" fill="#fff" stroke="#8f8f8f" stroke-width="1"/><rect x="1168" y="181" width="21" height="4.500" fill="#4a7ebf"/><path d="M1168.500 190.500H1188M1168.500 195.500H1188M1174.500 185.400V201.300M1181.500 185.400V201.300" stroke="#8f8f8f" stroke-width="1"/>
<rect x="1178.600" y="189" width="11.400" height="13.600" fill="#f7f7f7"/><path d="M1181.500 190.600H1178.600M1178.600 195.900H1181.500" stroke="#9a9a9a" stroke-width="1"/><path d="M1180.200 190.800H1189M1179.400 201.200H1189M1184.600 190.800V201.200" stroke="#4a7ebf" stroke-width="1.800"/>
<rect x="1251" y="182" width="13" height="13" fill="#4a7ebf"/><rect x="1264" y="182" width="13" height="13" fill="#e8849b"/><rect x="1251" y="195" width="13" height="13" fill="#6fa890"/><rect x="1264" y="195" width="13" height="13" fill="#e8bf7a"/>
<rect x="1080" y="248" width="8" height="25.600" fill="#e8bf7a"/><path d="M1080 253.500H1088M1080 258.500H1088M1080 263.500H1088M1080 268.500H1088" stroke="#fff" stroke-width=".8"/><rect x="1091.900" y="248.500" width="12.600" height="24.600" fill="#fff" stroke="#9a9a9a" stroke-width="1"/><rect x="1091.400" y="248" width="13.600" height="5.400" fill="#6e6e6e"/><path d="M1098.200 253.400V273M1091.900 258.400H1104.500M1091.900 263.400H1104.500M1091.900 268.400H1104.500" stroke="#b0b0b0" stroke-width="1"/>
<path d="M1093.600 274.800L1095.200 270L1102.800 262.400L1107.200 266.800L1099.600 274.200Z" fill="#e8bf7a" stroke="#f7f7f7" stroke-width=".8"/><path d="M1094 274.600L1095.400 271.200L1098.200 273.800Z" fill="#9a9a9a"/>
<path d="M1165.700 253.400V273.100H1170.800V253.400M1165.700 258.400H1170.800M1165.700 263.400H1170.800M1165.700 268.400H1170.800" fill="#fff" stroke="#9a9a9a" stroke-width="1"/><rect x="1165.200" y="248" width="5.800" height="5.400" fill="#6e6e6e"/>
<path d="M1179.400 253.400V273.100H1190.500V253.400M1179.400 258.400H1190.500M1179.400 263.400H1190.500M1179.400 268.400H1190.500M1185 253.400V273.100" fill="#fff" stroke="#9a9a9a" stroke-width="1"/><rect x="1179" y="248" width="12" height="5.400" fill="#6e6e6e"/>
<path d="M1172 253.400V273.100H1177.800V253.400M1172 258.400H1177.800M1172 263.400H1177.800M1172 268.400H1177.800" fill="#fff" stroke="#e8849b" stroke-width="1.100"/><rect x="1171.400" y="248" width="7" height="5.600" fill="#e8849b"/>
<path d="M1180.500 263.400L1192 274.400M1192 263.400L1180.500 274.400" stroke="#f7f7f7" stroke-width="4.200"/><path d="M1180.500 263.400L1192 274.400M1192 263.400L1180.500 274.400" stroke="#e8849b" stroke-width="2.600"/>
<path d="M1251.600 248.600H1276.400V253.600H1251.600ZM1257.800 248.600V253.600M1264 248.600V253.600M1270.200 248.600V253.600" fill="#fff" stroke="#e8849b" stroke-width="1.100"/>
<path d="M1251.600 258.700H1276.400V273.100H1251.600ZM1257.800 258.700V273.100M1264 258.700V273.100M1270.200 258.700V273.100M1251.600 263.500H1276.400M1251.600 268.300H1276.400" fill="#fff" stroke="#8f8f8f" stroke-width="1"/>
<path d="M1266 263.400L1277.600 274.400M1277.600 263.400L1266 274.400" stroke="#f7f7f7" stroke-width="4.200"/><path d="M1266 263.400L1277.600 274.400M1277.600 263.400L1266 274.400" stroke="#e8849b" stroke-width="2.600"/>
<g transform="translate(0,198)"><path d="M1080 116H1103L1095 130V134L1093 140.400L1088.500 137.500V130L1080 120Z" fill="#fdfdfd"/><path d="M1080 116H1101.600Q1104.400 116 1103 118.400L1095 129.800V133.200M1080 119.600L1088.500 130V137.600L1093 140.600" fill="none" stroke="#858585" stroke-width="1.100" stroke-linejoin="round"/></g>
<text x="1099.200" y="342" text-anchor="middle" font-family="Liberation Sans, sans-serif" font-size="25" fill="#4a7ebf">≠</text>
<rect x="1163.700" y="315.900" width="28.600" height="22.400" fill="#fff" stroke="#8f8f8f" stroke-width="1.100"/><text x="1178" y="335.800" text-anchor="middle" font-family="Liberation Sans, sans-serif" font-size="24.500" fill="#4f86c6">?</text>
<rect x="1254.800" y="313.700" width="18.800" height="18.800" fill="#fbfbfb" stroke="#8f8f8f" stroke-width="1.100"/><rect x="1259.200" y="315.800" width="11.600" height="2.200" fill="#757575"/><rect x="1256.200" y="320" width="2.200" height="9.400" fill="#757575"/><rect x="1256.200" y="315.800" width="2.200" height="2.200" fill="#757575"/>
<path d="M1261.400 328.400Q1269.600 328.400 1269.600 320" fill="none" stroke="#5b8fd0" stroke-width="1.100"/><path d="M1263.800 326L1261.200 328.400L1263.800 330.800M1267.200 322.400L1269.600 319.800L1272 322.400" fill="none" stroke="#5b8fd0" stroke-width="1.100"/>
<rect x="1080" y="384.800" width="11.600" height="17" rx="1" fill="#f8f8f8" stroke="#8f8f8f" stroke-width="1"/><path d="M1081 388H1090M1081 390.600H1090" stroke="#8d8d8d" stroke-width=".9"/><path d="M1081 393.400H1090M1081 396.400H1090M1081 399.200H1090" stroke="#6f9ad0" stroke-width=".9"/>
<rect x="1094.800" y="379.700" width="10" height="11" fill="#f4f4f4" stroke="#a8a8a8" stroke-width="1" stroke-dasharray="3 1.500"/><rect x="1094.800" y="395.700" width="10" height="11" fill="#f4f4f4" stroke="#a8a8a8" stroke-width="1" stroke-dasharray="3 1.500"/>
<path d="M1105.400 385.200H1096M1100.600 380.600L1096 385.200L1100.600 389.800M1105.400 401.200H1096M1100.600 396.600L1096 401.200L1100.600 405.800" fill="none" stroke="#4a7ebf" stroke-width="1.700"/>
<g transform="translate(1166,377.2)"><rect x="2.5" y="2.5" width="19" height="19" fill="#fff" stroke="#8f8f8f" stroke-width="1"/><rect x="2" y="2" width="20" height="3.600" fill="#808080"/>
<path d="M2.6 9.400H21.600M2.600 17.200H21.600M8.600 5.400V9.400M15.200 5.400V9.400M8.600 17.200V21.600M15.200 17.200V21.600" stroke="#9a9a9a" stroke-width="1"/><path d="M3 13.300H21" stroke="#dcdcdc" stroke-width="1" stroke-dasharray="2 1.500"/>
<path d="M2.800 13.300H10M5.600 10.600L2.900 13.300L5.600 16M21.400 13.300H14.200M18.600 10.600L21.300 13.300L18.600 16" fill="none" stroke="#5b8fd0" stroke-width="1"/></g>
<path d="M1257 381.800H1270.400A3.600 3.600 0 0 1 1270.400 389H1258A3.500 3.500 0 0 0 1258 396H1271" fill="none" stroke="#4a7ebf" stroke-width="1.200"/><circle cx="1257" cy="381.800" r="1.900" fill="#4a7ebf"/><circle cx="1271.200" cy="396" r="1.900" fill="#4a7ebf"/>
<g transform="translate(1079.9,443.4)"><path d="M2.5 8.2H8.4V20.4H2.5ZM2.5 12.3H8.4M2.5 16.3H8.4" fill="#fff" stroke="#7d7d7d" stroke-width="1.2"/><path d="M2.5 3.5H21.3V8.2H2.5ZM8.4 3.5V8.2M15.5 3.5V8.2" fill="#fff" stroke="#4a7ebf" stroke-width="1.3"/>
<path d="M12 15.6A5 5 0 0 1 20.8 13.2M22 17.4A5 5 0 0 1 13.2 19.8" fill="none" stroke="#4a7ebf" stroke-width="1.9"/><path d="M22.9 10.3V15.7H17.5ZM11.1 22.9V17.5H16.5Z" fill="#4a7ebf"/></g>
<text x="1178.200" y="457.900" text-anchor="middle" font-family="Liberation Sans, sans-serif" font-size="16.500" fill="#8d8d8d">AB</text><rect x="1165.700" y="461.700" width="24.800" height="9.600" fill="#fff" stroke="#8f8f8f" stroke-width="1.100"/><text x="1178.200" y="469.700" text-anchor="middle" font-family="Liberation Sans, sans-serif" font-weight="bold" font-size="8.600" fill="#4a7ebf" letter-spacing="1.200">1 2</text>
<rect x="1262.2" y="445.7" width="5.2" height="3.6" fill="#fff" stroke="#909090" stroke-width=".9"/><path d="M1263.6 447.5H1266.0" stroke="#a0a0a0" stroke-width=".9"/><rect x="1269" y="445.7" width="5.0" height="3.6" fill="#fff" stroke="#909090" stroke-width=".9"/><path d="M1270.4 447.5H1272.6" stroke="#a0a0a0" stroke-width=".9"/><rect x="1262.2" y="452.2" width="5.2" height="5.2" fill="#fff" stroke="#909090" stroke-width=".9"/><path d="M1263.6 454.8H1266.0" stroke="#e8849b" stroke-width="1.200"/><rect x="1269" y="452.2" width="5.0" height="5.2" fill="#fff" stroke="#909090" stroke-width=".9"/><rect x="1262.2" y="460" width="5.2" height="4.8" fill="#fff" stroke="#909090" stroke-width=".9"/><path d="M1263.6 462.4H1266.0" stroke="#e8849b" stroke-width="1.200"/><rect x="1269" y="460" width="5.0" height="4.8" fill="#fff" stroke="#909090" stroke-width=".9"/><path d="M1270.4 462.4H1272.6" stroke="#e8849b" stroke-width="1.200"/><path d="M1255.600 449.600V446.400H1259.400" fill="none" stroke="#707070" stroke-width="1.800"/><path d="M1254 454.800H1260.200M1257.100 451.700V457.900M1254 462.400H1260.200M1257.100 459.300V465.500" stroke="#5fa67c" stroke-width="1.700"/>
<rect x="1082.500" y="511.700" width="19" height="18.600" fill="#fff" stroke="#8a8a8a" stroke-width="1.100"/><path d="M1082.500 516.200H1101.500M1082.500 519.800H1101.500M1082.500 523.400H1101.500M1082.500 527H1101.500M1088.800 514V530.300M1095.200 514V530.300" stroke="#9a9a9a" stroke-width="1"/><rect x="1082" y="511.200" width="16.400" height="2" fill="#4a7ebf"/><rect x="1098.400" y="511.200" width="3.600" height="3" fill="#6e6e6e"/>
<rect x="1170.800" y="511.700" width="14.400" height="18.600" fill="#fff" stroke="#8f8f8f" stroke-width="1.100"/><path d="M1173 515H1177M1179 515H1183.200" stroke="#5b8fd0" stroke-width="1"/><path d="M1173 518.3H1177M1179 518.3H1183.200" stroke="#8f8f8f" stroke-width="1"/><path d="M1173 521.6H1177M1179 521.6H1183.200" stroke="#8f8f8f" stroke-width="1"/><path d="M1173 524.9H1177M1179 524.9H1183.200" stroke="#8f8f8f" stroke-width="1"/><path d="M1173 528.2H1177M1179 528.2H1183.200" stroke="#8f8f8f" stroke-width="1"/>
<path d="M1256.500 511.700H1266.400L1271.300 516.600V530.200H1256.500Z" fill="#fff" stroke="#9a9a9a" stroke-width="1"/><path d="M1266.200 511.900V516.800H1271.100" fill="none" stroke="#9a9a9a" stroke-width="1"/>
<path d="M1259 515.400H1263M1259 521.400H1265" stroke="#9a9a9a" stroke-width="1"/><path d="M1261 518.400H1268M1259 524.400H1262M1259 527.400H1260.500" stroke="#e8734a" stroke-width="1"/>
<path d="M1261.600 525.600L1266 529.800L1274.600 520.600" fill="none" stroke="#f7f7f7" stroke-width="3.600"/><path d="M1261.600 525.600L1266 529.800L1274.600 520.600" fill="none" stroke="#4a7ebf" stroke-width="2.300"/>
</g>
<g id="rbar">
<rect x="1337.500" y="110.500" width="19" height="19" rx="1" fill="#fff" stroke="#8a8a8a" stroke-width="1.100"/><rect x="1337" y="110" width="20" height="4.400" fill="#808080"/><path d="M1337.500 118.200H1356.500M1337.500 122H1356.500M1337.500 125.800H1356.500M1342.400 114.400V129.500M1347.100 114.400V129.500M1351.800 114.400V129.500" stroke="#9a9a9a" stroke-width="1"/>
<text x="1347" y="161.400" text-anchor="middle" font-family="Liberation Sans, sans-serif" font-weight="bold" font-size="27.500" fill="#7d7d7d">Σ</text>
<rect x="1337" y="178.700" width="4.600" height="15" rx="1" fill="#4a7ebf"/><rect x="1343.800" y="173.700" width="5" height="20" rx="1" fill="#e8bf7a"/><rect x="1351.200" y="182" width="4.800" height="11.700" rx="1" fill="#858585"/>
<path d="M1339.500 206V225M1337 223H1357.500" stroke="#858585" stroke-width="1.100"/><rect x="1342.600" y="214.500" width="3.400" height="8.500" fill="#fff" stroke="#6fa890" stroke-width="1"/><rect x="1346.400" y="210.500" width="4" height="12.500" fill="#e8bf7a"/><rect x="1351.200" y="215" width="3.600" height="8" fill="#fff" stroke="#e8849b" stroke-width="1"/>
<path d="M1341 215.500L1347 209L1351.200 211.800L1356.400 206" fill="none" stroke="#6fa890" stroke-width="1.100"/>
<rect x="1339.200" y="238.500" width="15.400" height="18.600" fill="#fff" stroke="#858585" stroke-width="1.100"/><rect x="1341.400" y="241" width="3.400" height="3.400" fill="#707070"/><path d="M1346.600 241.600H1352.400M1346.600 244.200H1352.400M1341.400 247.400H1352.400M1341.400 250.400H1352.400M1341.400 253.400H1346" stroke="#858585" stroke-width="1"/>
<path d="M1346.400 257.400L1347.600 253.400L1354.400 246.600L1357.400 249.600L1350.600 256.400Z" fill="#e8bf7a" stroke="#f5f5f5" stroke-width=".9"/>
</g>
</svg>

<!-- DIALOG -->
<div class="abs" id="dlg">
  <div class="abs title"></div>
  <svg style="left:8px;top:6px" width="16" height="17" viewBox="0 0 16 17"><path d="M0 5.3L8 1.2L16 5.3L8 9.6Z" fill="#f5b31a"/><path d="M0 5.3L8 9.6V16.6L0 12.1Z" fill="#ec881d"/><path d="M16 5.3L8 9.6V16.6L16 12.1Z" fill="#f59d0e"/><path d="M3.5 2.8V4.8A4.5 2.4 0 0 0 12.5 4.8V2.800Z" fill="#ee9a1e"/><ellipse cx="8" cy="2.800" rx="4.500" ry="2.500" fill="#f2c10f"/></svg>
  <div class="t" style="left:29px;top:6px;font-size:12px">数据-基本信息</div>
  <div class="t" style="left:728px;top:6px;font-size:13px;font-family:'Liberation Mono',monospace">?</div>
  <svg style="left:772px;top:9px" width="10" height="10"><path d="M0 0L10 10M10 0L0 10" stroke="#000" stroke-width="1.1"/></svg>

  <div class="t" style="left:11px;top:44px">数据集名称:</div>
  <div class="t" style="left:11px;top:72px">路径:</div>
  <div class="t" style="left:11px;top:100px">行:</div>
  <div class="t" style="left:11px;top:128px">列:</div>
  <div class="t" style="left:11px;top:156px">文件大小:</div>
  <div class="t" style="left:11px;top:184px">内存占用:</div>
  <div class="t" style="left:11px;top:212px">创建时间:</div>
  <div class="t" style="left:11px;top:240px">更新时间:</div>

  <div class="inp" style="left:83px;top:41px;width:662px"><div class="t mono" style="left:2px;top:2px">class.csv</div></div>
  <div class="btn" style="left:751px;top:42px;width:38px;height:20px"><div class="t mono" style="left:10px;top:2px;font-size:9px;letter-spacing:.6px;color:#333">...</div></div>
  <div class="inp" style="left:83px;top:69px;width:706px;border-color:#3d9ef5;box-shadow:inset 0 0 0 .5px #8cc6fa"><div class="t mono" style="left:1px;top:2px">C:/Users/tom/Desktop/PyMiner/package/class.csv</div></div>
  <div class="inp" style="left:83px;top:97px;width:706px"><div class="t mono" style="left:1px;top:2px">19</div></div>
  <div class="inp" style="left:83px;top:125px;width:706px"><div class="t mono" style="left:1px;top:2px">5</div></div>
  <div class="inp" style="left:83px;top:153px;width:706px"><div class="t mono" style="left:1px;top:2px">411 bytes</div></div>
  <div class="inp" style="left:83px;top:181px;width:706px"><div class="t mono" style="left:1px;top:2px">912 bytes</div></div>
  <div class="inp" style="left:83px;top:209px;width:706px"><div class="t mono" style="left:1px;top:2px">2020-08-10 19:18:29</div></div>
  <div class="inp" style="left:83px;top:237px;width:706px"><div class="t mono" style="left:1px;top:2px">2020-08-10 19:18:29</div></div>

  <div class="abs" id="tbl" style="left:11px;top:265px;width:778px;height:310px;border:1px solid #a9a9a9;background:#fff">
    <div class="abs" style="left:0;top:0;width:11px;height:308px;background:#f0f0f0"></div>
    <div class="abs hdr" style="left:0;top:0;width:311px;height:21px;border-bottom:1px solid #c4c4c4"></div>
    <div class="abs" style="left:311px;top:0;width:465px;height:21px;background:#f0f0f0"></div>
    <div class="abs" style="left:110px;top:0;width:1px;height:21px;background:#c8c8c8"></div>
    <div class="abs" style="left:210px;top:0;width:1px;height:21px;background:#c8c8c8"></div>
    <div class="abs" style="left:310px;top:0;width:1px;height:21px;background:#e0e0e0"></div>
    <div class="t hc" style="left:11px;width:100px;top:3px">变量名称</div>
    <div class="t hc" style="left:111px;width:100px;top:3px">数据类型</div>
    <div class="t hc" style="left:211px;width:100px;top:3px">非空值数量</div>
    <div class="abs" style="left:0;top:21px;width:311px;height:30px;border-bottom:1px solid #c6c6c6"></div>
    <div class="t mono" style="left:2px;top:28px;font-size:11px">1</div>
    <div class="t cc" style="left:11px;top:27px">Name</div>
    <div class="t cc" style="left:111px;top:27px">object</div>
    <div class="t cc" style="left:211px;top:27px">19</div>
    <div class="abs" style="left:0;top:51px;width:311px;height:30px;border-bottom:1px solid #c6c6c6"></div>
    <div class="t mono" style="left:2px;top:58px;font-size:11px">2</div>
    <div class="t cc" style="left:11px;top:57px">Sex</div>
    <div class="t cc" style="left:111px;top:57px">object</div>
    <div class="t cc" style="left:211px;top:57px">19</div>
    <div class="abs" style="left:0;top:81px;width:311px;height:30px;border-bottom:1px solid #c6c6c6"></div>
    <div class="t mono" style="left:2px;top:88px;font-size:11px">3</div>
    <div class="t cc" style="left:11px;top:87px">Age</div>
    <div class="t cc" style="left:111px;top:87px">int64</div>
    <div class="t cc" style="left:211px;top:87px">19</div>
    <div class="abs" style="left:0;top:111px;width:311px;height:30px;border-bottom:1px solid #c6c6c6"></div>
    <div class="t mono" style="left:2px;top:118px;font-size:11px">4</div>
    <div class="t cc" style="left:11px;top:117px">Height</div>
    <div class="t cc" style="left:111px;top:117px">float64</div>
    <div class="t cc" style="left:211px;top:117px">19</div>
    <div class="abs" style="left:0;top:141px;width:311px;height:30px;border-bottom:1px solid #c6c6c6"></div>
    <div class="t mono" style="left:2px;top:148px;font-size:11px">5</div>
    <div class="t cc" style="left:11px;top:147px">Weight</div>
    <div class="t cc" style="left:111px;top:147px">float64</div>
    <div class="t cc" style="left:211px;top:147px">19</div>
    <div class="abs" style="left:10px;top:21px;width:1px;height:150px;background:#c6c6c6"></div>
    <div class="abs" style="left:110px;top:21px;width:1px;height:150px;background:#c6c6c6"></div>
    <div class="abs" style="left:210px;top:21px;width:1px;height:150px;background:#c6c6c6"></div>
    <div class="abs" style="left:310px;top:21px;width:1px;height:150px;background:#c6c6c6"></div>
  </div>

  <div class="btn" style="left:20px;top:590px;width:80px;height:20px;border-color:#3d9ef5;background:linear-gradient(#f6f8fb,#e8ecf1)"><div class="t" style="left:0;right:0;top:1px">帮助</div></div>
  <div class="btn" style="left:614px;top:590px;width:80px;height:20px"><div class="t" style="left:0;right:0;top:1px">确定</div></div>
  <div class="btn" style="left:700px;top:590px;width:80px;height:20px"><div class="t" style="left:0;right:0;top:1px">取消</div></div>

</div>

<div class="abs" id="winborder"></div>
</body>
</html>
